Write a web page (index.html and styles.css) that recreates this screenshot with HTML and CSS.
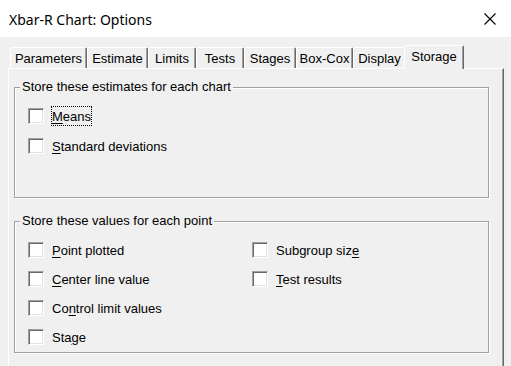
FILE: index.html
```html
<!DOCTYPE html>
<html lang="en">
<head>
<meta charset="UTF-8">
<title>Xbar-R Chart: Options</title>
<link rel="stylesheet" href="styles.css">
</head>
<body>

<div class="titlebar">
    <span class="title">Xbar-R Chart: Options</span>
    <svg class="close" width="12" height="12" viewBox="0 0 12 12">
        <path d="M0.5 0.5 L11.5 11.5 M11.5 0.5 L0.5 11.5" stroke="#000" stroke-width="1.1" fill="none"/>
    </svg>
</div>

<div class="tabs">
    <div class="tab tab-parameters">Parameters</div>
    <div class="tab tab-estimate">Estimate</div>
    <div class="tab tab-limits">Limits</div>
    <div class="tab tab-tests">Tests</div>
    <div class="tab tab-stages">Stages</div>
    <div class="tab tab-boxcox">Box-Cox</div>
    <div class="tab tab-display">Display</div>
    <div class="tab tab-storage selected">Storage</div>
</div>

<div class="panel">
    <div class="group group-estimates">
        <div class="legend">Store these estimates for each chart</div>
        <div class="checklist">
            <label class="check"><span class="box"></span><span class="text focus"><u>M</u>eans</span></label>
            <label class="check"><span class="box"></span><span class="text"><u>S</u>tandard deviations</span></label>
        </div>
    </div>

    <div class="group group-points">
        <div class="legend">Store these values for each point</div>
        <div class="checkgrid">
            <div class="checkcol">
                <label class="check"><span class="box"></span><span class="text"><u>P</u>oint plotted</span></label>
                <label class="check"><span class="box"></span><span class="text"><u>C</u>enter line value</span></label>
                <label class="check"><span class="box"></span><span class="text">Co<u>n</u>trol limit values</span></label>
                <label class="check"><span class="box"></span><span class="text">Sta<u>g</u>e</span></label>
            </div>
            <div class="checkcol">
                <label class="check"><span class="box"></span><span class="text">Subgroup siz<u>e</u></span></label>
                <label class="check"><span class="box"></span><span class="text"><u>T</u>est results</span></label>
            </div>
        </div>
    </div>
</div>

</body>
</html>
```

FILE: styles.css
```css
body {
    margin: 0;
    height: 366px;
    overflow: hidden;
    background: #f0f0f0;
    font-family: "Liberation Sans", Arial, sans-serif;
    font-size: 13px;
    color: #000;
}
.titlebar {
    height: 37px;
    background: #fff;
    display: flex;
    align-items: center;
    justify-content: space-between;
    padding: 0 15px 0 9px;
}
.title {
    font-family: "Noto Sans", "Open Sans", sans-serif;
    font-size: 14px;
    padding-top: 1px;
}
.close {
    display: block;
}

/* tab strip */
.tabs {
    display: flex;
    align-items: flex-end;
    height: 23px;
    margin: 8px 0 0 10px;
}
.tab {
    box-sizing: border-box;
    height: 21px;
    padding-top: 2px;
    line-height: 17px;
    text-align: center;
    white-space: nowrap;
    border-top: 1px solid #fff;
    border-left: 1px solid #fff;
    border-right: 1px solid #696969;
    border-top-left-radius: 2px;
    border-top-right-radius: 2px;
    box-shadow: inset -1px 0 #a0a0a0;
}
.tab.selected {
    height: 24px;
    margin: 0 -2px -1px -2px;
    position: relative;
    z-index: 1;
    background: #f0f0f0;
}
.tab-parameters { width: 77px; }
.tab-estimate { width: 61px; }
.tab-limits { width: 48px; }
.tab-tests { width: 48px; }
.tab-stages { width: 52px; }
.tab-boxcox { width: 57px; }
.tab-display { width: 53px; }
.tab-storage { width: 60px; }

/* page of the tab control */
.panel {
    margin: 0 7px 0 8px;
    padding: 0 14px 30px 5px;
    border-top: 1px solid #fff;
    border-left: 1px solid #fff;
    border-right: 1px solid #696969;
    box-shadow: inset -1px 0 #a0a0a0;
}
.group {
    border: 1px solid #a0a0a0;
    box-shadow: inset 1px 1px #fff, 1px 1px #fff;
}
.group-estimates {
    margin-top: 18px;
    padding-bottom: 41px;
}
.group-points {
    margin-top: 23px;
    padding-bottom: 5px;
}
.legend {
    display: table;
    margin: -9px 0 0 5px;
    padding: 0 2px;
    line-height: 16px;
    background: #f0f0f0;
}
.checklist {
    display: flex;
    flex-direction: column;
    gap: 10px;
    padding: 11px 0 0 13px;
}
.checkgrid {
    display: grid;
    grid-template-columns: 224px auto;
    padding: 11px 0 0 13px;
}
.checkcol {
    display: flex;
    flex-direction: column;
    gap: 9px;
}
.check {
    display: flex;
    align-items: center;
    gap: 8px;
    height: 20px;
}
.box {
    box-sizing: border-box;
    width: 16px;
    height: 16px;
    background: #fff;
    border: 1px solid;
    border-color: #a0a0a0 #fff #fff #a0a0a0;
    box-shadow: inset 1px 1px #696969, inset -1px -1px #e3e3e3;
}
.text {
    line-height: 18px;
    padding-top: 2px;
}
.text.focus {
    display: inline-block;
    padding-top: 0;
    height: 18px;
    line-height: 20px;
    overflow: hidden;
    outline: 1px dotted #000;
}
u {
    text-underline-offset: 2px;
}
```
